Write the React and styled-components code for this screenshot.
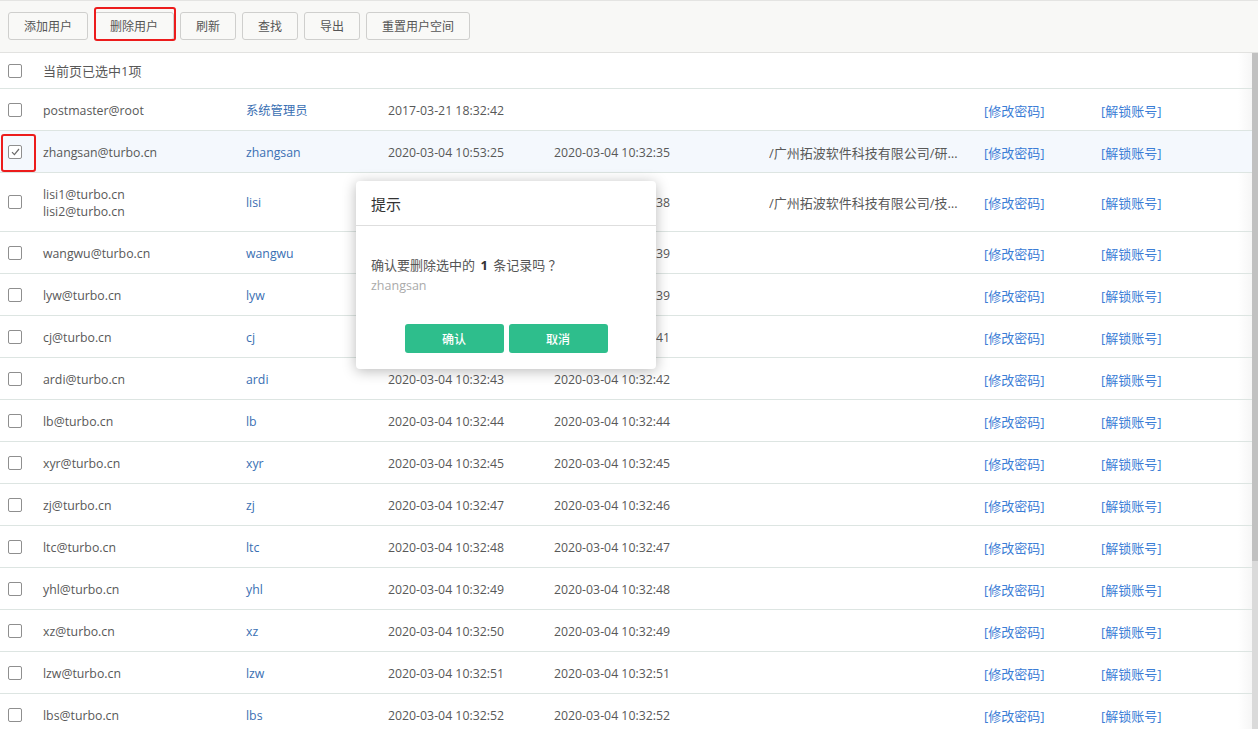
import React from 'react'
import styled, { createGlobalStyle } from 'styled-components'

const users = [
  { email: ['postmaster@root'], name: '系统管理员', created: '2017-03-21 18:32:42', login: '', dept: '' },
  { email: ['zhangsan@turbo.cn'], name: 'zhangsan', created: '2020-03-04 10:53:25', login: '2020-03-04 10:32:35', dept: '/广州拓波软件科技有限公司/研发部', selected: true },
  { email: ['lisi1@turbo.cn', 'lisi2@turbo.cn'], name: 'lisi', created: '2020-03-04 10:32:38', login: '2020-03-04 10:32:38', dept: '/广州拓波软件科技有限公司/技术部' },
  { email: ['wangwu@turbo.cn'], name: 'wangwu', created: '2020-03-04 10:32:40', login: '2020-03-04 10:32:39', dept: '' },
  { email: ['lyw@turbo.cn'], name: 'lyw', created: '2020-03-04 10:32:40', login: '2020-03-04 10:32:39', dept: '' },
  { email: ['cj@turbo.cn'], name: 'cj', created: '2020-03-04 10:32:42', login: '2020-03-04 10:32:41', dept: '' },
  { email: ['ardi@turbo.cn'], name: 'ardi', created: '2020-03-04 10:32:43', login: '2020-03-04 10:32:42', dept: '' },
  { email: ['lb@turbo.cn'], name: 'lb', created: '2020-03-04 10:32:44', login: '2020-03-04 10:32:44', dept: '' },
  { email: ['xyr@turbo.cn'], name: 'xyr', created: '2020-03-04 10:32:45', login: '2020-03-04 10:32:45', dept: '' },
  { email: ['zj@turbo.cn'], name: 'zj', created: '2020-03-04 10:32:47', login: '2020-03-04 10:32:46', dept: '' },
  { email: ['ltc@turbo.cn'], name: 'ltc', created: '2020-03-04 10:32:48', login: '2020-03-04 10:32:47', dept: '' },
  { email: ['yhl@turbo.cn'], name: 'yhl', created: '2020-03-04 10:32:49', login: '2020-03-04 10:32:48', dept: '' },
  { email: ['xz@turbo.cn'], name: 'xz', created: '2020-03-04 10:32:50', login: '2020-03-04 10:32:49', dept: '' },
  { email: ['lzw@turbo.cn'], name: 'lzw', created: '2020-03-04 10:32:51', login: '2020-03-04 10:32:51', dept: '' },
  { email: ['lbs@turbo.cn'], name: 'lbs', created: '2020-03-04 10:32:52', login: '2020-03-04 10:32:52', dept: '' }
]

const actions = ['添加用户', '删除用户', '刷新', '查找', '导出', '重置用户空间']

const App = () => (
  <Page>
    <GlobalStyle />
    <Toolbar>
      {actions.map(label => (
        <ToolButton key={label}>
          {label}
          {label === '删除用户' && <Highlight $left={-1} $top={-6} $width={82} $height={34} />}
        </ToolButton>
      ))}
    </Toolbar>

    <Body>
      <Table>
        <SummaryRow>
          <CheckCell><Checkbox /></CheckCell>
          <span>当前页已选中1项</span>
        </SummaryRow>
        {users.map(user => (
          <Row key={user.email[0]} $selected={user.selected} $tall={user.email.length > 1}>
            <CheckCell>
              <Checkbox>{user.selected && <CheckMark />}</Checkbox>
              {user.selected && <Highlight $left={1} $top={3} $width={35} $height={38} />}
            </CheckCell>
            <EmailCell>
              {user.email.map(e => <div key={e}>{e}</div>)}
            </EmailCell>
            <NameCell>{user.name}</NameCell>
            <Cell>{user.created}</Cell>
            <Cell>{user.login}</Cell>
            <DeptCell>{user.dept}</DeptCell>
            <LinkCell>[修改密码]</LinkCell>
            <LinkCell>[解锁账号]</LinkCell>
          </Row>
        ))}
      </Table>
      <ScrollTrack>
        <ScrollThumb />
      </ScrollTrack>
    </Body>

    <Dialog>
      <DialogTitle>提示</DialogTitle>
      <DialogBody>
        <Question>确认要删除选中的 <b>1</b> 条记录吗 ？</Question>
        <Detail>zhangsan</Detail>
      </DialogBody>
      <DialogFooter>
        <PrimaryButton>确认</PrimaryButton>
        <PrimaryButton>取消</PrimaryButton>
      </DialogFooter>
    </Dialog>
  </Page>
)

const CheckMark = () => (
  <svg width="9" height="8" viewBox="0 0 9 8">
    <path d="M1 4.2 L3.4 6.6 L8 1" fill="none" stroke="#6a6a6a" strokeWidth="1.2" />
  </svg>
)

const GlobalStyle = createGlobalStyle`
  body {
    margin: 0;
    background: #fff;
    font-family: "Open Sans", "Noto Sans CJK SC", sans-serif;
    font-size: 13px;
    color: #585858;
  }
  * { box-sizing: border-box; }
`

const Page = styled.div`
  position: relative;
  height: 729px;
  display: flex;
  flex-direction: column;
  overflow: hidden;
`

const Toolbar = styled.div`
  flex: none;
  height: 53px;
  display: flex;
  align-items: flex-start;
  gap: 6px;
  padding: 11px 8px 0;
  background: #f8f8f6;
  border-top: 1px solid #e4e4e2;
  border-bottom: 1px solid #e2e2e0;
`

const ToolButton = styled.button`
  position: relative;
  height: 28px;
  padding: 0 15px 2px;
  border: 1px solid #cfcfcd;
  border-radius: 3px;
  background: #f9f9f7;
  font-family: "Noto Sans CJK SC", sans-serif;
  font-size: 12px;
  color: #555;
  cursor: pointer;
`

const Highlight = styled.span`
  position: absolute;
  left: ${p => p.$left}px;
  top: ${p => p.$top}px;
  width: ${p => p.$width}px;
  height: ${p => p.$height}px;
  border: 2px solid #ec1c1c;
  border-radius: 3px;
  pointer-events: none;
`

const Body = styled.div`
  flex: 1;
  min-height: 0;
  display: flex;
`

const Table = styled.div`
  flex: 1;
  overflow: hidden;
  background: linear-gradient(to right, #fff 1238px, #f6f6f6);
`

const ScrollTrack = styled.div`
  flex: none;
  width: 6px;
  background: #dadada;
`

const ScrollThumb = styled.div`
  height: 508px;
  background: #c1c1c1;
`

const SummaryRow = styled.div`
  height: 36px;
  display: flex;
  align-items: center;
  border-bottom: 1px solid #dde5e2;
`

const Row = styled.div`
  display: grid;
  grid-template-columns: 43px 203px 142px 166px 215px 215px 117px 1fr;
  align-items: center;
  height: ${p => (p.$tall ? 59 : 42)}px;
  border-bottom: 1px solid #dde5e2;
  background: ${p => (p.$selected ? '#f4f8fd' : 'transparent')};
  font-size: 12.3px;
`

const CheckCell = styled.div`
  position: relative;
  width: 43px;
  height: 100%;
  display: flex;
  align-items: center;
  padding-left: 8px;
`

const Checkbox = styled.span`
  width: 14px;
  height: 14px;
  display: flex;
  align-items: center;
  justify-content: center;
  border: 1px solid #8f8f8f;
  border-radius: 2px;
  background: #fff;
`

const Cell = styled.div`
  white-space: nowrap;
  padding-top: 1px;
`

const EmailCell = styled.div`
  line-height: 17px;
  padding-top: 1px;
`

const NameCell = styled(Cell)`
  color: #3a6fb3;
`

const DeptCell = styled(Cell)`
  overflow: hidden;
  text-overflow: ellipsis;
  padding-right: 25px;
  font-size: 13px;
`

const LinkCell = styled(Cell)`
  color: #3b7dd6;
  font-size: 13px;
`

const Dialog = styled.div`
  position: absolute;
  left: 356px;
  top: 181px;
  width: 300px;
  background: #fff;
  border-radius: 4px;
  box-shadow: 0 2px 14px rgba(0, 0, 0, 0.28);
`

const DialogTitle = styled.div`
  height: 45px;
  display: flex;
  align-items: center;
  padding-left: 15px;
  border-bottom: 1px solid #dedede;
  font-family: "Noto Sans CJK SC", sans-serif;
  font-size: 15px;
  color: #333;
`

const DialogBody = styled.div`
  padding: 29px 15px 0;
  height: 98px;
`

const Question = styled.div`
  font-size: 13px;
  color: #555;
  b { color: #333; margin: 0 2px; }
`

const Detail = styled.div`
  margin-top: 3px;
  font-size: 12.5px;
  color: #aaa;
`

const DialogFooter = styled.div`
  display: flex;
  justify-content: center;
  gap: 5px;
  padding-bottom: 16px;
`

const PrimaryButton = styled.button`
  width: 99px;
  height: 29px;
  padding: 0 0 1px;
  border: none;
  border-radius: 3px;
  background: #2ebe8c;
  color: #fff;
  font-family: "Noto Sans CJK SC", sans-serif;
  font-size: 12px;
  font-weight: 500;
  cursor: pointer;
`

export default App
